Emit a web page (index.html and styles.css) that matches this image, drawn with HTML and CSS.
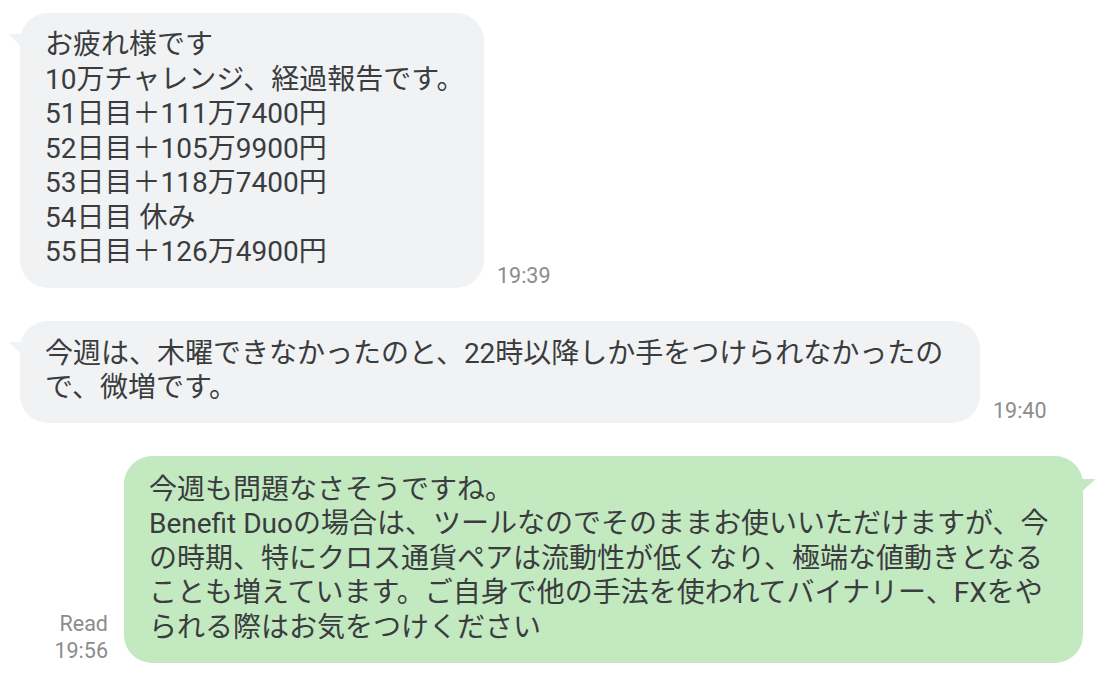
FILE: index.html
```html
<!DOCTYPE html>
<html lang="ja">
<head>
  <meta charset="UTF-8">
  <meta name="viewport" content="width=device-width, initial-scale=1.0">
  <title>トーク</title>
  <link rel="stylesheet" href="styles.css">
</head>
<body>
  <main class="chat">

    <div class="row in">
      <div class="bubble b1">
        お疲れ様です<br>
        10万チャレンジ、経過報告です。<br>
        51日目＋111万7400円<br>
        52日目＋105万9900円<br>
        53日目＋118万7400円<br>
        54日目 休み<br>
        55日目＋126万4900円
      </div>
      <div class="meta">19:39</div>
    </div>

    <div class="row in">
      <div class="bubble b2">
        今週は、木曜できなかったのと、22時以降しか手をつけられなかったの<br>で、微増です。
      </div>
      <div class="meta">19:40</div>
    </div>

    <div class="row out">
      <div class="meta">Read<br>19:56</div>
      <div class="bubble b3">
        今週も問題なさそうですね。<br>
        Benefit Duoの場合は、ツールなのでそのままお使いいただけますが、今<br>の時期、特にクロス通貨ペアは流動性が低くなり、極端な値動きとなる<br>ことも増えています。ご自身で他の手法を使われてバイナリー、FXをや<br>られる際はお気をつけください
      </div>
    </div>

  </main>
</body>
</html>
```

FILE: styles.css
```css
body{
  margin: 0;
  background: #ffffff;
  font-family: Roboto, "Noto Sans CJK JP", sans-serif;
  color: #3a3c3e;
}

.chat{
  display: flex;
  flex-direction: column;
  gap: 33px;
  padding: 13px 23px 0 20px;
}

.row{
  display: flex;
  align-items: flex-end;
  gap: 13px;
}
.row.out{
  justify-content: flex-end;
  gap: 16px;
}

.bubble{
  position: relative;
  box-sizing: border-box;
  padding: 15px 20px 18px 25px;
  border-radius: 28px;
  font-size: 28px;
  line-height: 34.5px;
  white-space: nowrap;
  background: #f1f2f4;
}
.bubble::before{
  content: "";
  position: absolute;
  top: 21px;
  width: 14px;
  height: 13px;
}
.in .bubble::before{
  left: -12px;
  background: #f1f2f4;
  clip-path: polygon(0 0, 100% 0, 100% 100%);
}
.out .bubble{
  background: #c3e9c1;
}
.out .bubble::before{
  right: -13px;
  top: 23px;
  background: #c3e9c1;
  clip-path: polygon(0 0, 100% 0, 0 100%);
}

.b1{
  width: 464px;
}
.b2{
  width: 960px;
  padding-top: 16px;
  padding-bottom: 17px;
}
.b3{
  width: 959px;
  padding-top: 17px;
  padding-bottom: 18px;
}

.meta{
  font-size: 21.5px;
  line-height: 27px;
  color: #8c8c8c;
  margin-bottom: -1px;
}
.out .meta{
  text-align: right;
}
```
